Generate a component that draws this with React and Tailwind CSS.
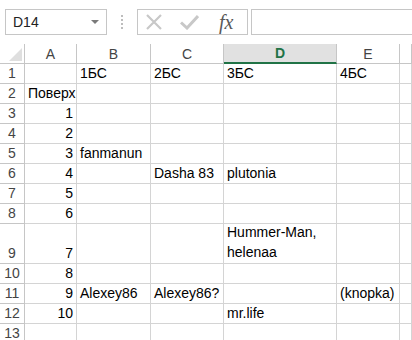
import React from 'react';

const cols = ['A', 'B', 'C', 'D', 'E', ''];

const rows = [
  { n: 1, h: 'h-5', cells: ['', '1БС', '2БС', '3БС', '4БС'] },
  { n: 2, h: 'h-5', cells: ['Поверх', '', '', '', ''] },
  { n: 3, h: 'h-5', cells: [1, '', '', '', ''] },
  { n: 4, h: 'h-5', cells: [2, '', '', '', ''] },
  { n: 5, h: 'h-5', cells: [3, 'fanmanun', '', '', ''] },
  { n: 6, h: 'h-5', cells: [4, '', 'Dasha 83', 'plutonia', ''] },
  { n: 7, h: 'h-5', cells: [5, '', '', '', ''] },
  { n: 8, h: 'h-5', cells: [6, '', '', '', ''] },
  { n: 9, h: 'h-10', cells: [7, '', '', 'Hummer-Man, helenaa', ''] },
  { n: 10, h: 'h-5', cells: [8, '', '', '', ''] },
  { n: 11, h: 'h-5', cells: [9, 'Alexey86', 'Alexey86?', '', '(knopka)'] },
  { n: 12, h: 'h-5', cells: [10, '', '', 'mr.life', ''] },
  { n: 13, h: 'h-5', cells: ['', '', '', '', ''] },
];

const grid = 'grid grid-cols-[25px_52px_74px_73px_113px_63px_1fr]';

const Cell = ({ value, h }) => {
  const isNum = typeof value === 'number';
  return (
    <div
      className={`${h} border-r border-b border-[#d4d4d4] flex items-end px-[3px] pb-px overflow-visible whitespace-nowrap ${
        isNum ? 'justify-end' : 'justify-start'
      }`}
    >
      {value === 'Hummer-Man, helenaa' ? (
        <div className="leading-5 whitespace-normal">
          Hummer-Man,
          <br />
          helenaa
        </div>
      ) : (
        <span className="leading-[18px]">{value}</span>
      )}
    </div>
  );
};

export default function App() {
  return (
    <div className="w-[412px] h-[340px] overflow-hidden bg-white text-[14px] text-black font-['Liberation_Sans',Arial,sans-serif]">
      {/* Formula bar */}
      <div className="h-11 flex items-start pt-[9px] pl-[5px]">
        <div className="w-[102px] h-[26px] border border-[#c6c6c6] flex items-center justify-between pl-[7px] pr-[7px]">
          <span className="text-[14px] text-[#222]">D14</span>
          <svg width="8" height="5" viewBox="0 0 8 5">
            <path d="M0 0 L8 0 L4 4 Z" fill="#7a7a7a" />
          </svg>
        </div>
        <div className="w-[30px] h-[26px] flex flex-col items-center justify-center gap-[2px]">
          <span className="w-[2px] h-[2px] bg-[#bdbdbd]" />
          <span className="w-[2px] h-[2px] bg-[#bdbdbd]" />
          <span className="w-[2px] h-[2px] bg-[#bdbdbd]" />
          <span className="w-[2px] h-[2px] bg-[#bdbdbd]" />
        </div>
        <div className="w-[111px] h-[26px] border border-[#c6c6c6] flex items-center">
          <svg className="ml-[7px]" width="18" height="18" viewBox="0 0 18 18">
            <path d="M2 2 L16 16 M16 2 L2 16" stroke="#c8c8c8" strokeWidth="2.2" />
          </svg>
          <svg className="ml-[17px]" width="19" height="16" viewBox="0 0 19 16">
            <path d="M1 8.5 L7 14 L18 2" stroke="#c8c8c8" strokeWidth="3" fill="none" />
          </svg>
          <span className="ml-[20px] text-[20px] italic text-[#595959] leading-none font-['Liberation_Serif',serif]">
            fx
          </span>
        </div>
        <div className="ml-[3px] flex-1 h-[26px] border border-r-0 border-[#c6c6c6]" />
      </div>

      {/* Column headers */}
      <div className={`${grid} h-5`}>
        <div className="relative border-r border-b border-[#c6c6c6]">
          <svg className="absolute right-[2px] bottom-[2px]" width="13" height="13" viewBox="0 0 13 13">
            <path d="M13 0 L13 13 L0 13 Z" fill="#dfdfdf" />
          </svg>
        </div>
        {cols.map((c, i) =>
          c === 'D' ? (
            <div
              key={i}
              className="bg-[#e1e1e1] border-r border-[#c6c6c6] border-b-2 border-b-[#217346] flex items-center justify-center font-bold text-[#217346] leading-none"
            >
              D
            </div>
          ) : (
            <div
              key={i}
              className="border-r border-b border-[#c6c6c6] flex items-center justify-center text-[#444] leading-none"
            >
              {c}
            </div>
          )
        )}
      </div>

      {/* Rows */}
      {rows.map((r) => (
        <div key={r.n} className={grid}>
          <div className={`${r.h} border-r border-b border-[#c6c6c6] flex items-end justify-center pb-px text-[#444]`}>
            <span className="leading-[18px]">{r.n}</span>
          </div>
          {r.cells.map((v, i) => (
            <Cell key={i} value={v} h={r.h} />
          ))}
          <Cell value="" h={r.h} />
        </div>
      ))}
    </div>
  );
}
